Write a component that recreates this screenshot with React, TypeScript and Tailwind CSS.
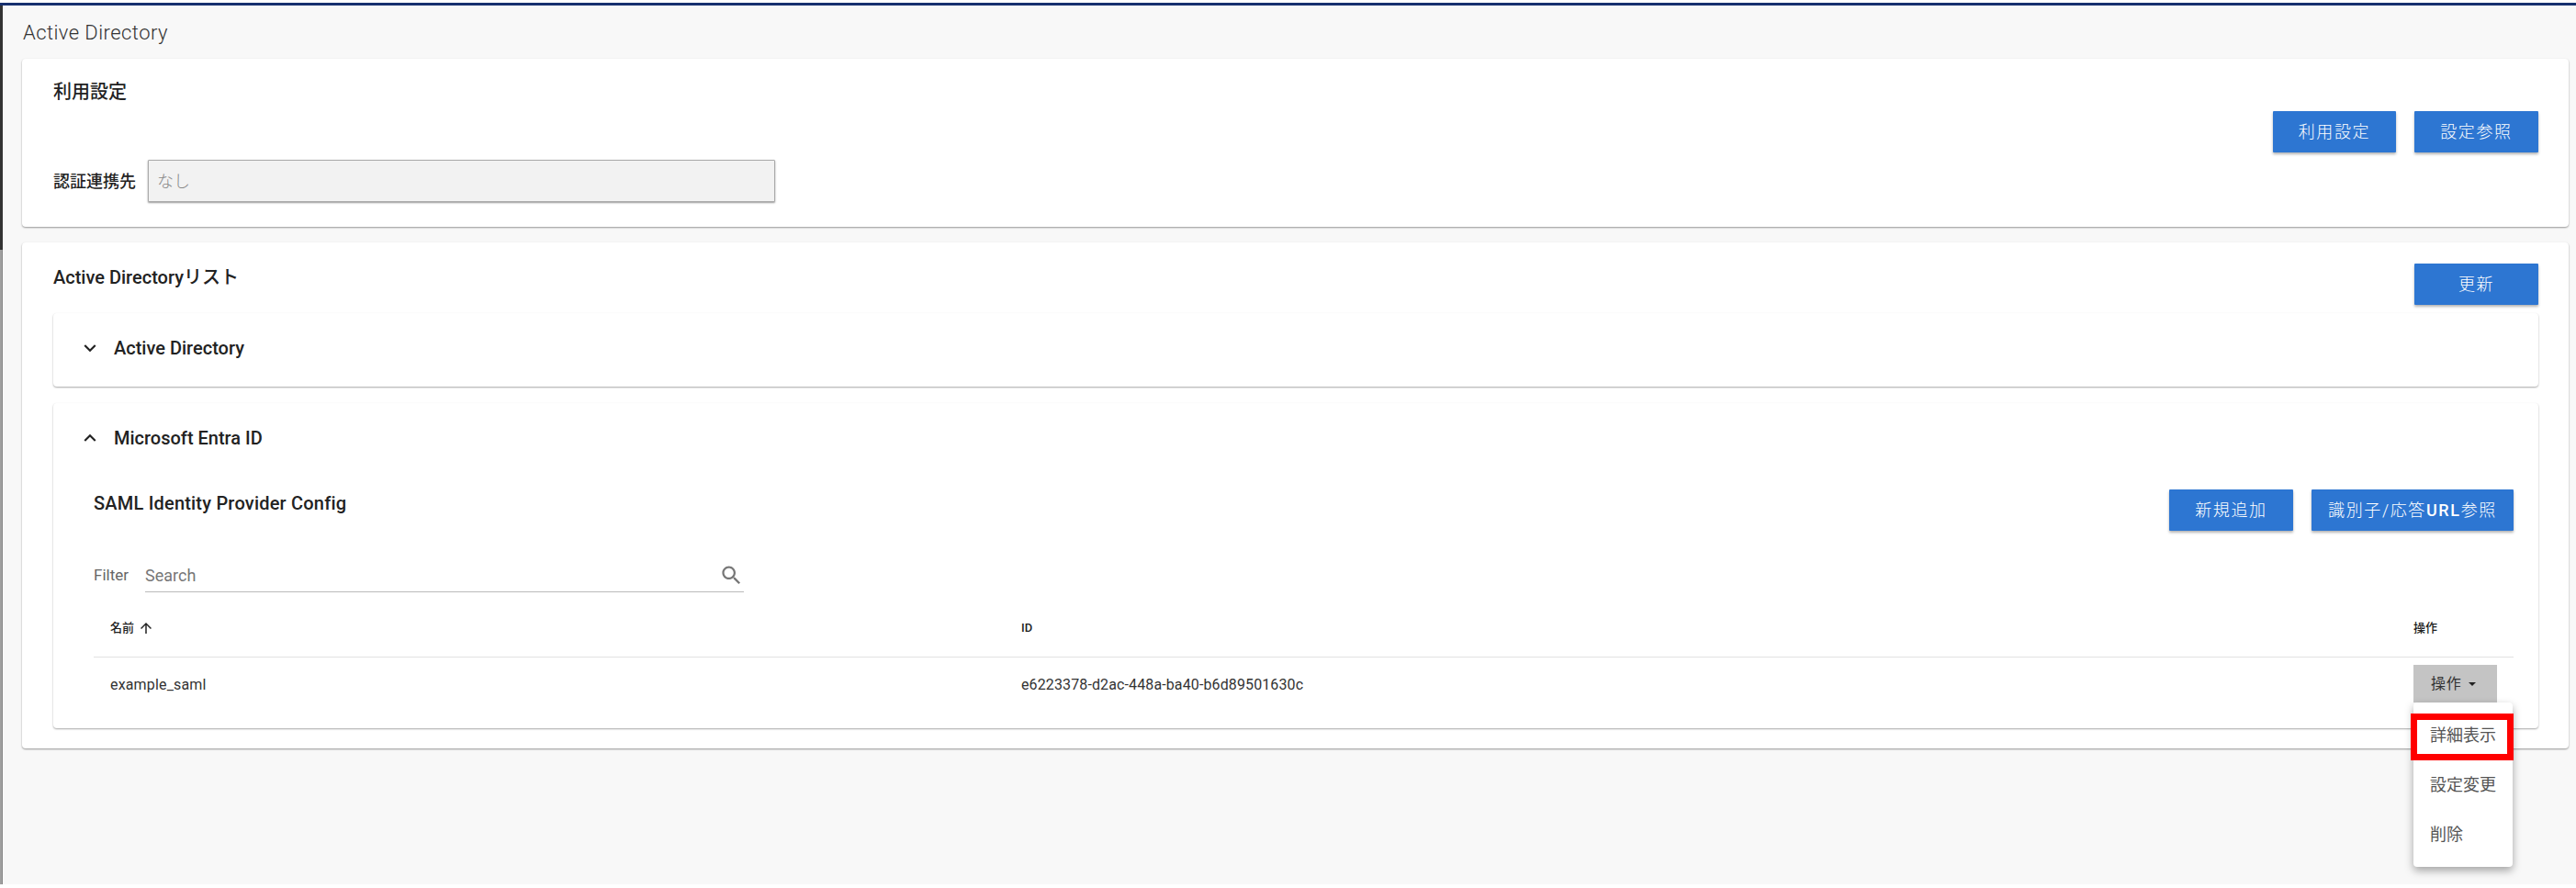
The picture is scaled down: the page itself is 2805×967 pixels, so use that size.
function ChevronIcon({ up }: { up?: boolean }) {
  return (
    <svg width="26" height="26" viewBox="0 0 24 24" fill="#222" className={up ? "ml-[-6px]" : "ml-[-6px] rotate-180"}>
      <path d="M7.41 15.41L12 10.83l4.59 4.58L18 14l-6-6-6 6z" />
    </svg>
  );
}

function BlueButton({ label, width = "w-[135px]" }: { label: React.ReactNode; width?: string }) {
  return (
    <button className={`${width} h-[45px] bg-[#2d76d2] text-white text-[18px] tracking-[0.09em] font-light rounded-[1px] shadow-[0_2px_3px_rgba(0,0,0,0.3)] flex items-center justify-center`}>
      {label}
    </button>
  );
}

export default function App() {
  return (
    <div className="w-[2805px] h-[967px] bg-white overflow-hidden font-['Roboto','Noto_Sans_CJK_JP',sans-serif] text-[#222]">
      <div className="h-[3px] bg-white" />
      <div className="h-[3px] bg-[#17306f]" />
      <div className="h-[957px] flex">
        <div className="w-[3px] flex flex-col">
          <div className="h-[266px] bg-[#333]" />
          <div className="flex-1 bg-[#a0a0a0] border-r border-[#888]" />
        </div>
        <main className="flex-1 bg-[#f8f8f8] pl-[21px] pr-[8px]">
          <h1 className="h-[58px] pt-[18px] pl-[1px] text-[22px] leading-[24px] font-light tracking-[0.02em] text-[#333]">Active Directory</h1>

          <section className="h-[183px] bg-white rounded-[4px] shadow-[0_1px_2px_rgba(0,0,0,0.4)] pl-[34px] pr-[33px] flex justify-between">
            <div>
              <h2 className="mt-[22px] text-[20px] leading-[28px] font-medium">利用設定</h2>
              <div className="mt-[60px] flex items-center">
                <label className="w-[103px] text-[18px] font-medium whitespace-nowrap">認証連携先</label>
                <div className="w-[683px] h-[46px] bg-[#f2f2f2] border border-[#aaa] rounded-[1px] shadow-[0_1px_2px_rgba(0,0,0,0.4)] pl-[9px] flex items-center text-[18px] text-[#888] font-light">
                  なし
                </div>
              </div>
            </div>
            <div className="mt-[57px] flex gap-[20px] h-[45px]">
              <BlueButton label="利用設定" width="w-[134px]" />
              <BlueButton label="設定参照" />
            </div>
          </section>

          <section className="mt-[17px] h-[551px] bg-white rounded-[4px] shadow-[0_1px_2px_rgba(0,0,0,0.4)] pl-[34px] pr-[33px] pt-[23px]">
            <div className="flex justify-between h-[54px]">
              <h2 className="text-[20px] leading-[28px] font-medium mt-[1px]">Active Directoryリスト</h2>
              <BlueButton label="更新" />
            </div>

            <div className="h-[80px] bg-white rounded-[4px] shadow-[0_1px_2px_rgba(0,0,0,0.35)] pl-[33px] pt-[25px] flex items-start">
              <ChevronIcon />
              <span className="ml-[13px] text-[20px] leading-[26px] font-medium">Active Directory</span>
            </div>

            <div className="mt-[18px] h-[354px] bg-white rounded-[4px] shadow-[0_1px_2px_rgba(0,0,0,0.35)]">
              <div className="h-[76px] pl-[33px] pt-[25px] flex items-start">
                <ChevronIcon up />
                <span className="ml-[13px] text-[20px] leading-[26px] font-medium">Microsoft Entra ID</span>
              </div>

              <div className="pl-[44px] pr-[27px]">
                <div className="flex justify-between h-[98px] pt-[18px]">
                  <h3 className="text-[20px] leading-[26px] font-medium mt-[2px] tracking-[0.01em]">SAML Identity Provider Config</h3>
                  <div className="flex gap-[20px] h-[45px]">
                    <BlueButton label="新規追加" />
                    <BlueButton label={<>識別子/応答<span className="font-medium">URL</span>参照</>} width="w-[220px]" />
                  </div>
                </div>

                <div className="flex items-center h-[36px] mt-[-4px]">
                  <span className="w-[56px] text-[17px] text-[#666]">Filter</span>
                  <div className="w-[652px] h-[36px] border-b border-[#bbb] flex items-center justify-between pr-0">
                    <span className="text-[18px] text-[#777]">Search</span>
                    <svg width="27" height="27" viewBox="0 0 24 24" fill="#777">
                      <path d="M15.5 14h-.79l-.28-.27C15.41 12.59 16 11.11 16 9.5 16 5.91 13.09 3 9.5 3S3 5.91 3 9.5 5.91 16 9.5 16c1.61 0 3.09-.59 4.23-1.57l.27.28v.79l5 4.99L20.49 19l-4.99-5zm-6 0C7.01 14 5 11.99 5 9.5S7.01 5 9.5 5 14 7.01 14 9.5 11.99 14 9.5 14z" />
                    </svg>
                  </div>
                </div>

                <div className="grid grid-cols-[992px_1516px_127px] h-[71px] border-b border-[#e2e2e2] text-[13px] font-medium">
                  <div className="pl-[18px] pt-[29px] flex items-start leading-[20px]">
                    名前
                    <svg width="18" height="18" viewBox="0 0 24 24" fill="#222" className="ml-[4px] mt-[1px]">
                      <path d="M4 12l1.41 1.41L11 7.83V20h2V7.83l5.58 5.59L20 12l-8-8-8 8z" />
                    </svg>
                  </div>
                  <div className="pl-[18px] pt-[29px] leading-[20px]">ID</div>
                  <div className="pl-[18px] pt-[29px] leading-[20px]">操作</div>
                </div>

                <div className="grid grid-cols-[992px_1516px_127px] text-[16px] text-[#333]">
                  <div className="pl-[18px] pt-[18px] leading-[24px] tracking-[0.01em]">example_saml</div>
                  <div className="pl-[18px] pt-[18px] leading-[24px] tracking-[0.12px]">e6223378-d2ac-448a-ba40-b6d89501630c</div>
                  <div className="pl-[18px] pt-[8px] relative">
                    <button className="w-[91px] h-[41px] bg-[#c4c4c4] text-[16px] tracking-[0.05em] flex items-center pl-[19px]">
                      操作
                      <span className="ml-[7px] w-0 h-0 border-x-[4px] border-x-transparent border-t-[4px] border-t-[#222]" />
                    </button>
                    <div className="absolute left-[18px] top-[49px] w-[108px] h-[179px] bg-white rounded-[4px] shadow-[0_4px_10px_rgba(0,0,0,0.35)] z-10 pt-[8px] text-[18px] text-[#555]">
                      <div className="h-[54px] pl-[18px] flex items-center">詳細表示</div>
                      <div className="h-[54px] pl-[18px] flex items-center">設定変更</div>
                      <div className="h-[54px] pl-[18px] flex items-center">削除</div>
                      <div className="absolute left-[-3px] top-[12px] w-[112px] h-[51px] border-[7px] border-[#ff0000]" />
                    </div>
                  </div>
                </div>
              </div>
            </div>
          </section>
        </main>
      </div>
    </div>
  );
}
